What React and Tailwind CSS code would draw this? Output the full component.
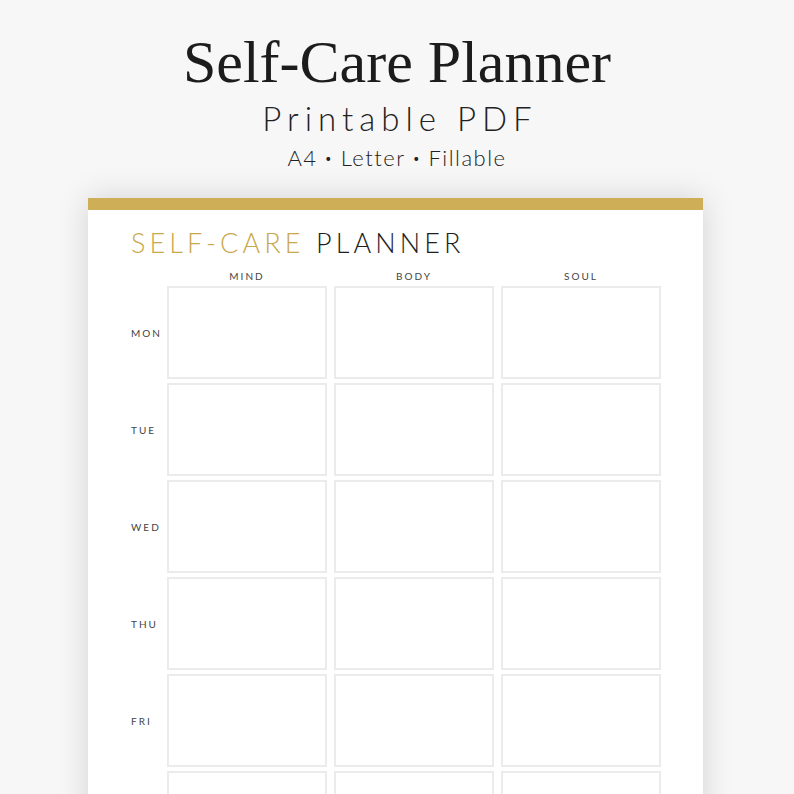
export default function App() {
  const days = ["MON", "TUE", "WED", "THU", "FRI", ""];
  const cols = ["MIND", "BODY", "SOUL"];
  return (
    <div className="w-[794px] h-[794px] overflow-hidden bg-[#f7f7f7] flex flex-col items-center">
      <div
        className="mt-[29px] text-[60px] leading-[66px] font-normal text-[#1c1c1c]"
        style={{ fontFamily: '"Liberation Serif", serif' }}
      >
        Self-Care Planner
      </div>
      <div
        className="mt-[4px] text-[33px] leading-[38px] font-light text-[#222] tracking-[6px] pl-[6px]"
        style={{ fontFamily: 'Lato, sans-serif' }}
      >
        Printable PDF
      </div>
      <div
        className="mt-[8px] text-[22px] leading-[26px] font-light text-[#222] tracking-[1.5px] flex items-center"
        style={{ fontFamily: 'Lato, sans-serif' }}
      >
        <span>A4</span>
        <span className="text-[13px] mx-[7px]">•</span>
        <span>Letter</span>
        <span className="text-[13px] mx-[7px]">•</span>
        <span>Fillable</span>
      </div>
      <div className="mt-[27px] w-[615px] self-start ml-[88px] bg-white shadow-[0_0_30px_rgba(0,0,0,0.15)] flex-1">
        <div className="h-[12px] bg-[#cfae58]" />
        <div className="pl-[43px]" style={{ fontFamily: 'Lato, sans-serif' }}>
          <div className="mt-[17px] text-[27px] leading-[32px] font-light tracking-[4.1px]">
            <span className="text-[#c9a84c]">SELF-CARE</span>{" "}
            <span className="text-[#1e1e1e]">PLANNER</span>
          </div>
          <div className="grid grid-cols-[29px_160px_160px_160px] gap-x-[7px] gap-y-[4px] mt-[1px]">
            <div className="h-[22px]" />
            {cols.map((c) => (
              <div key={c} className="h-[22px] flex items-start justify-center pt-[10px] text-[10px] leading-[12px] tracking-[2px] text-[#444]">
                {c}
              </div>
            ))}
            {days.map((d, i) => [
              <div key={"l" + i} className="h-[93px] flex items-center text-[10px] leading-[12px] tracking-[2px] text-[#444]">
                {d}
              </div>,
              ...cols.map((c) => (
                <div key={"b" + i + c} className="h-[93px] border-2 border-[#ebebeb]" />
              )),
            ])}
          </div>
        </div>
      </div>
    </div>
  );
}
